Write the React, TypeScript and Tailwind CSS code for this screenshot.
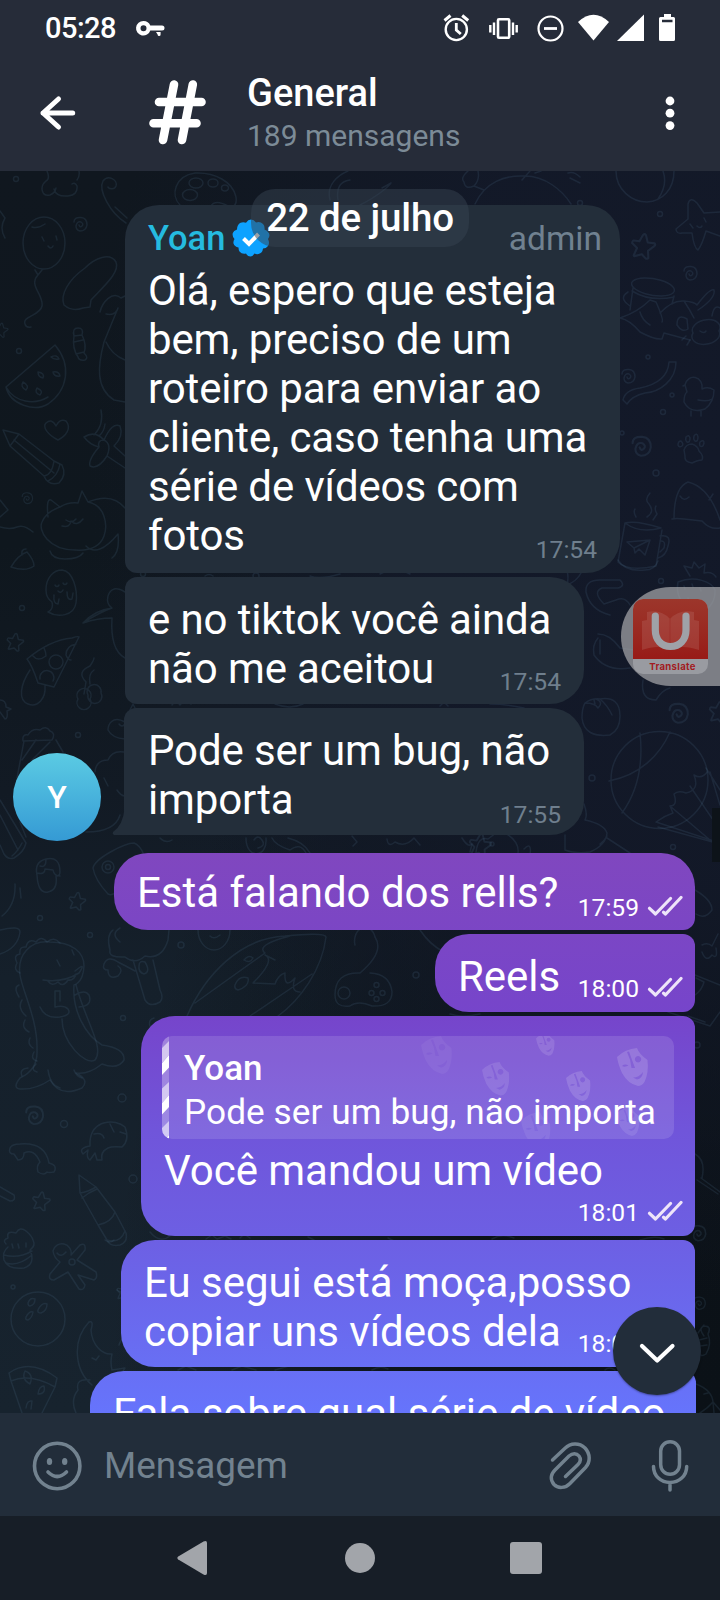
import React from "react";

type Placed = { x: number; y: number; s?: number; r?: number };

const DOTS: [number, number, number][] = [
  [16, 179, 2.5], [19, 351, 2.5], [580, 373, 2], [660, 214, 2.5], [648, 357, 2], [672, 395, 2], [663, 412, 2.5],
  [622, 433, 2], [656, 473, 3], [661, 581, 2.5], [592, 778, 3], [673, 847, 2.5], [22, 608, 2.5], [78, 735, 2.5],
  [40, 918, 2.5], [90, 935, 2.5], [181, 945, 3], [123, 1018, 2.5], [122, 1098, 4], [64, 1124, 3.5], [133, 1179, 4],
  [13, 1287, 2], [416, 975, 3], [697, 1045, 3], [143, 574, 2.5], [256, 576, 3], [580, 203, 2.5], [492, 844, 2],
];

const SPIRALS: Placed[] = [
  { x: 80, y: 224 }, { x: 27, y: 498, s: 0.8 }, { x: 690, y: 273 }, { x: 628, y: 376 }, { x: 641, y: 446, s: 1.4 },
  { x: 678, y: 713, s: 1.4 }, { x: 34, y: 1115, s: 1.3 }, { x: 698, y: 1233, s: 1.1 }, { x: 699, y: 1303, s: 0.9 },
];

const STARS: Placed[] = [
  { x: 643, y: 246, s: 1.4 }, { x: 15, y: 642 }, { x: 77, y: 901 }, { x: 41, y: 1201, s: 1.05 }, { x: 719, y: 712, s: 1.2 },
  { x: 124, y: 1292, s: 0.9 }, { x: 1, y: 330, s: 0.8 }, { x: 480, y: 845, s: 1.3 },
];

const DOODLES = [
  "M47 171C50 178 48 180 46 181C39 187 42 197 50 195Q55 193 56 188M54 189Q56 197 68 196Q78 195 77 186Q75 182 72 184M77 180Q80 176 79 171",
  "M126 223C110 213 98 190 103 181C108 174 118 180 116 186C114 191 108 188 108 187M115 207L127 218",
  "M180 205C170 195 175 176 195 173C215 172 233 182 236 197Q237 203 234 206M211 206Q215 199 228 206",
  "M189 183a7 5 0 1 0 14 0a7 5 0 1 0-14 0M208 183a5 4 0 1 0 10 0a5 4 0 1 0-10 0M221.500 188a3.500 3 0 1 0 7 0a3.500 3 0 1 0-7 0M182.500 195a7.500 5.500 0 1 0 15 0a7.500 5.500 0 1 0-15 0",
  "M0 211L5 218Q-1 228 5 238M330 200C326 185 338 175 348 171M338 200Q335 182 350 180M360 205C380 195 390 185 391 183L382 188",
  "M23 243a21 26 0 1 0 42 0a21 26 0 1 0-42 0M32 227Q38 229 45 224M42 237l2 4M56 236l1 4M48 246q3 4 5 0M35 270l3 5l4-5M38 275C28 285 44 295 42 306C40 316 22 316 25 324q1 4 6 3",
  "M83 308L90 307L91 300C105 285 120 272 116 262C110 252 95 258 85 268C68 280 60 295 64 305Q72 312 83 308Z",
  "M100 312C102 303 112 290 121 298L125 296M106 314Q116 316 118 308L104 342C98 365 95 388 114 400L125 402M106 342Q112 355 125 360",
  "M74 336q-2-8 4-8q6 0 4 7q5 10 2 18q5 5 1 7q-6 1-7-3q-6-9-4-21M74 336l8-1M74 342l9-2M76 354l8-2",
  "M55 345L6 387C10 405 35 412 48 404C68 390 72 365 55 345ZM6 387C15 403 35 405 48 397",
  "M23 382q-3 5 3 8q4-4-3-8M37 388q-3 5 3 7q4-4-3-7M38 372q0 5 5 6q2-5-5-6M53 372q1 5 7 4q-1-5-7-4M51 357q3 3 8 2q-2-5-8-2",
  "M58 440C48 435 42 427 46 423Q52 418 56 426Q60 418 66 421C72 428 66 436 58 440Z",
  "M3 430L10 446L44 476Q48 486 59 483Q67 475 62 465L54 461L19 434ZM10 446L19 434M14 440L54 473M44 476Q52 475 54 461M48 481Q58 476 60 464",
  "M101 410Q104 425 94 435M84 437Q95 430 104 440Q112 422 120 426Q124 436 114 446L125 456M84 437Q90 445 99 447Q88 460 90 466Q98 470 107 456L125 468M99 447q-2-7 5-7q8 4 3 16M105 424q-1 8-6 12",
  "M48 517Q46 498 51 500L60 507Q68 502 78 503L82 491L88 502C105 505 108 525 104 536C100 547 90 551 75 550C48 550 38 530 42 522Q46 512 60 507M50 551q2 8 15 8q14 0 18-6M88 502Q112 492 125 508M66 520q6 4 10-1M62 526q8 2 9-5q6 6 12-2M86 546Q98 558 118 534Q120 552 112 558",
  "M0 500l8 10l-8 7M0 527Q10 530 17 527T33 532M11 567Q18 555 27 552Q34 560 34 566Q26 572 11 567M22 555q-1-6 4-6",
  "M46 590C46 577 54 570 62 570C73 571 78 590 76 603C74 616 58 618 48 612Q54 609 52 602Q46 598 46 590ZM55 585q2 3 4 0M63 583q2 3 4 0M58 591q3 3 5-1M54 595q-1 9 4 9l1-5M67 592q0 9 5 7l1-6",
  "M125 592Q112 584 108 596Q106 604 112 608Q95 610 83 623Q98 618 112 618Q110 650 125 658M112 608Q100 612 83 623",
  "M79 637L54 687L38 683Q32 665 27 659Q50 640 72 638Q78 636 79 637M33 656Q38 662 46 656Q46 652 44 648M76 644Q66 646 66 655Q68 660 71 660M49 662a7 7 0 1 1 14 0a7 7 0 1 1-14 0M40 679a7 7 0 1 1 13 2M30 670C20 685 18 700 28 704C38 708 46 698 45 686",
  "M84 694l2-12q-10-10 4-16q4-6 4-8M90 684q-2-10 4-14M78 699a7 7 0 1 0 12 0a7 7 0 1 0-12 0M88 695a7 7 0 1 0 13-2a7 7 0 1 0-13 2",
  "M0 700q6 0 6 7l5 2l-4 2q1 8-2 8L0 712M125 722C112 715 108 725 108 730Q112 738 125 739M130 710l3-6l3 6M119 724q3 4 6 0",
  "M23 741Q22 734 28 735Q32 728 40 730Q46 725 50 731Q56 733 52 740ZM24 741L17 778M36 740L22 760M56 740L63 752M50 742L32 760",
  "M95 772Q96 760 108 760Q112 750 124 752M104 778l4 8M86 832Q115 832 120 815M117 790q4 6 8 6",
  "M0 800L26 843Q24 852 14 858Q8 860 4 854L0 845M0 815L18 850M12 856q6-5 10-13M20 822l6 15",
  "M93 868C95 858 125 843 134 843Q140 845 144 855M93 868Q95 880 108 894Q112 896 116 892M102 867a6 6 0 1 0 12 0a6 6 0 1 0-12 0M105.500 867a2.500 2.500 0 1 0 5 0a2.500 2.500 0 1 0-5 0",
  "M37 875Q34 862 46 859Q60 856 60 872Q60 876 56 876Q58 890 48 892Q38 894 37 875ZM37 873q8 2 8-4l8 1q1 6 7 6M40 866q6 2 6-6",
  "M15 884Q16 905 2 916M20 888l1 10M0 930Q20 925 20 932Q18 948 0 954",
  "M20 1078Q38 1070 37 1050C38 1020 22 990 20 975C17 955 30 940 50 942C72 942 84 952 84 966Q83 982 74 985C72 1010 85 1035 102 1045Q125 1048 124 1060Q118 1070 102 1064Q88 1075 76 1073Q90 1080 82 1088Q60 1098 50 1080Q35 1090 20 1089Q12 1088 20 1078Z",
  "M43 980q20 3 36-7q8-12-4-2M48 981q4 6 10 1q5 6 10-2q6 1 8-6M40 1007q5 12 20 10q12-2 8-8q-4-4-13-2l0-16l5 0l0 10M75 995q10-6 14 0q4 11-10 12M62 1019C62 1042 85 1066 95 1060C105 1048 85 1020 76 985M57 960l3 6M72 950l2 5M48 1070Q50 1085 60 1088M74 1070q2 6 8 8",
  "M20 973q-7-3-3-10q-4-8 3-9q-1-8 6-7q2-9 10-5q5-7 11 0q7-6 13 1M19 985q-6 2 0 12M22 1000q-5 8 4 16M25 1020q-4 8 4 12M30 1038q-3 6 3 10M34 1052q-4 7 3 9M36 1064q-6 6 1 8M28 1068q-9 1-6 8",
  "M113 930Q106 935 110 950Q108 958 125 957Q135 965 145 956Q162 960 168 940L169 930M120 942q-10-8 0-14M133 960L145 1000Q150 1008 160 1002Q164 998 160 990L153 960M139 966q0-6 6-4q6 10-1 12q-6-2-5-8M135 971Q124 965 118 962Q108 955 104 964Q102 970 108 970Q108 980 118 976Q124 970 118 966",
  "M187 1016C205 975 240 938 285 936Q325 932 326 937C322 970 300 1000 278 1016M195 1003L265 953Q255 945 290 936M250 1016L312 974M275 960L265 955Q276 960 253 983L275 984Q278 975 285 973Q284 990 295 978Q290 992 300 992M244 960q5-6 9-2q-3 6-9 2M235 985q4-10 13-7q2 8-10 12q-4-1-3-5",
  "M198 930a12 15 0 0 0 32 0M210 936q4 4 10-1M355 945a10 13 0 1 1 20-8q10 15-15 36Q335 972 335 995Q335 1008 350 1006Q358 1000 372 1006Q392 1007 392 992Q390 974 370 973",
  "M338 993a6 6 0 1 0 12 0a6 6 0 1 0-12 0M374 985a2.500 2.500 0 1 0 5 0a2.500 2.500 0 1 0-5 0M369 993a2.500 2.500 0 1 0 5 0a2.500 2.500 0 1 0-5 0M380 993a2.500 2.500 0 1 0 5 0a2.500 2.500 0 1 0-5 0M374 999a2.500 2.500 0 1 0 5 0a2.500 2.500 0 1 0-5 0M420 930Q430 945 444 952",
  "M90 1141C92 1120 115 1118 125 1127Q130 1140 122 1147Q112 1146 108 1148Q100 1152 102 1160L97 1160L95 1153L90 1160Q86 1158 88 1150L83 1154Q78 1148 90 1146ZM110 1124l4 8M94 1134q8-2 10 4M120 1132l6 2",
  "M10 1148Q12 1144 20 1144Q45 1142 49 1163Q58 1165 54 1172Q48 1173 47 1172Q44 1176 38 1172Q36 1166 40 1162Q34 1148 24 1153Q24 1160 18 1160L14 1154Q8 1154 10 1148Z",
  "M79 1175L80 1193L98 1225L107 1240Q110 1247 120 1245Q128 1242 126 1233L115 1212L96 1187ZM80 1193Q88 1192 96 1187M98 1225Q112 1222 115 1212M82 1198l7-5l8-4M107 1240Q120 1244 125 1231M0 1187l14 8q2 6-4 6L0 1196",
  "M6 1244Q2 1240 8 1238Q6 1230 16 1233Q20 1226 26 1231Q32 1236 33 1240Q36 1246 30 1250Q36 1264 24 1268Q8 1270 4 1260Q2 1252 8 1247M4 1255q14 4 28-4M6 1263q12 4 26-8M12 1244l1 4M18 1244l1 4M26 1243l0 4",
  "M53 1251a9 9 0 1 1 18 4L80 1245Q86 1242 85 1250L77 1260L96 1272Q98 1278 94 1280L78 1275L85 1285Q84 1291 79 1289L68 1272L54 1280Q48 1280 50 1274L60 1262Q54 1258 53 1251ZM57 1253q4 5 9-1M69 1262a3 3 0 1 0 6 0a3 3 0 1 0-6 0",
  "M11 1319a27 27 0 1 0 54 0a27 27 0 1 0-54 0M28 1303q2-6 7-4q0 6-5 7q-2 0-2-3M38 1310q4-8 9-6q0 7-6 9q-4 0-3-3M26 1317q3-6 7-5q-1 6-5 8q-3 0-2-3",
  "M89 1322C72 1340 74 1370 92 1385M89 1322Q94 1320 91 1330C92 1345 102 1355 112 1354Q110 1362 112 1370L125 1368Q120 1378 108 1376M92 1358l4 2l3-4M119 1345q2-6 6-8M90 1380Q75 1378 78 1390Q70 1400 76 1413",
  "M9 1373Q30 1358 57 1378L55 1387L42 1413M9 1373L11 1381Q30 1373 55 1387M11 1381L22 1413M25 1371q-4 8 5 13q4-10-5-13M38 1394q1-8 6-8q2 8-6 8M26 1408q1-8 6-7l-1 8",
  "M117 1290q8 6 8-4M105 1240Q110 1244 114 1240",
  // right side
  "M475 204C485 182 505 175 525 176C545 176 562 190 571 204M478 171Q480 180 474 186Q465 190 464 182Q460 178 468 171M474 186L484 190M522 180l8-9M535 173l6-2M570 178l10 5M568 173q6-2 12 4",
  "M616 171C616 190 632 202 647 202C662 201 674 190 674 171M663 171Q668 185 658 199",
  "M688 204Q690 196 697 203L704 213L720 212M688 204L688 219L676 229Q676 234 682 233L692 233Q694 248 698 250Q702 245 706 231L720 236M690 224l3 4M704 218l2 4M697 226q3 3 5 0",
  "M633 281a21 8 10 1 0 40 12a21 8 10 1 0-40-12M633 288L630 310M674 296L672 304M632 291Q650 302 674 297M628 292Q618 298 630 306M620 318Q638 312 650 300L656 302Q664 320 662 322M620 318Q630 320 640 332Q655 340 662 339L664 333L690 340M660 313Q672 300 684 301Q690 310 694 318M640 312Q642 320 650 325M684 301Q695 302 697 305Q710 288 714 290Q716 298 698 310",
  "M693 333a14 9-10 1 0 26-2a14 9-10 1 0-26 2M677 325q0-12 10-6l1 10q-6 4-11-4M712 316q2-12 8-8M686 336l-4 4M690 340l-3 5M700 331q4 3 6 0",
  "M669 362L676 362C676 380 660 392 645 393Q632 396 627 404L623 400Q625 390 640 388C655 385 668 378 669 362Z",
  "M685 385a8 9 0 1 1 17 4Q708 386 714 390Q714 402 705 409Q690 414 684 402Q684 394 687 392ZM685 385l-2 1M698 400q10 2 14-1M691 411l0 5M701 411l0 5",
  "M684 450q2-6 8-6q6 2 7 7Q704 456 702 460Q698 460 692 463Q684 462 685 456ZM678 445q0-4 3-4q3 3 1 5q-3 2-4-1M686 437q3-3 4 1q0 5-3 4q-2-2-1-5M694 436q3-4 4 1q0 5-3 4q-2-2-1-5M700 442q4-3 4 1q-1 5-4 3q-1-2 0-4",
  "M672 519Q676 518 684 519L702 521Q710 530 720 528M674 519C674 500 678 486 688 482C705 486 715 505 720 520M680 496q4 6 9 1M709 500l4-6",
  "M625 523L618 562Q628 572 656 566L662 530M625 523Q636 520 661 528Q640 534 625 523M660 536Q672 534 668 546Q666 556 658 558M660 541Q666 540 664 548L660 552M627 542L650 540L645 555L639 549L635 553L634 548ZM634 548L650 540M650 493Q644 500 649 504Q655 512 647 517M635 509q-2 3 1 8M656 506q-2 3 1 8l-4 6",
  "M678 582C695 575 712 582 715 590C716 610 695 620 686 606Q675 596 678 582ZM690 576l-6-10l8 2l2-6l5 6l6-4l-1 9q8-2 12 4M684 586l1 3M692 584l1 3M700 588l1 3M688 598l1 3M697 600l1 3M618 560Q625 572 645 570Q655 570 658 561",
  "M610 615Q590 610 586 592Q585 580 600 580L620 580Q626 586 618 588L602 588Q592 592 604 604L616 600Q625 596 630 605M598 638Q592 645 594 655Q606 672 630 668M598 634Q610 634 620 648L634 650M600 640l0 14M643 680Q640 700 656 700Q662 690 670 688",
  "M567 571q2 6 0 14q10-4 14-12",
  "M585 703Q592 698 600 699Q620 696 620 716Q620 730 610 735Q584 738 582 718Q582 708 585 703M585 703q10 0 13 5q6-6-2-9M600 699Q608 706 612 715M595 704l-1-4",
  "M611 780a48.500 48.500 0 1 0 97 0a48.500 48.500 0 1 0-97 0M640 733C644 770 635 795 622 813M609 781C640 775 660 755 670 732",
  "M706 768L720 790M710 772L720 805M694 775Q702 780 708 771M694 775Q700 790 686 793Q678 790 674 794Q678 806 670 806L673 813Q664 816 656 822L720 843M658 827L720 844M690 786L720 830M670 806L710 840",
  "M584 804Q588 815 585 820Q604 824 607 833Q606 845 590 852Q575 854 565 850V835M600 844q5-4 7-8M607 838L630 853",
  "M387 839Q388 848 395 842Q405 848 414 838L420 845M462 838q6 10 10 6l-2 8M476 852Q478 836 488 839L500 830Q520 840 518 853M524 849q8-8 6 6",
  "M695 890Q712 900 712 910Q705 920 696 914M702 945Q708 942 712 946L718 934M702 952Q706 963 712 955Q718 960 716 948M695 975L720 985M695 995Q702 990 704 982L696 978M668 1012L710 1026L720 1012M688 1016L705 1022",
  "M695 1154Q706 1160 702 1178M701 1178L720 1192M697 1180L718 1194",
  "M704 1336q-6-8 0-10q8 0 4 8q4 10-2 20q-6 4-6-2M699 1340l8-2M700 1346l7-1M698 1333q4-6 6-8",
  "M696 1384Q712 1390 713 1402L720 1410M704 1394l4-1M700 1413Q708 1408 713 1402L714 1413",
  // glimpses between bubbles
  "M160 838q6 6 12 2M246 838C246 860 268 858 266 838M254 840q4-6 8 0t-4 8M272 838Q275 845 290 850Q300 842 306 853M288 838Q304 842 310 853M352 836l5 6l-4 4",
  "M172 705l4-5l4 5l5-6l6 5M275 704q15 6 28 0M205 576q4-3 8 0M310 576q10 4 30-2M380 574q15-8 30 0M440 706l4-4l4 4M490 704q16 0 34 4",
  "M150 1026q-2-6 4-8M206 1239l6-4l5 4l8-3l6 3M240 1238l4-4l6 4M308 1237l6 3M388 1238l6 3M492 1239q10-6 22-1M640 1240q15-5 24-1M150 1232Q160 1244 170 1236",
  "M178 1370l8-4l10 4M232 1370l10-4l14 4M275 1370l14-4M372 1370q8-5 16-1M605 1370q4-4 10 0M450 1014q12 4 30 0",
];

function Wallpaper() {
  return (
    <div className="absolute inset-0 -z-10 bg-[radial-gradient(ellipse_at_100%_24%,#131929_0%,rgba(19,25,41,0.9)_30%,rgba(19,25,41,0)_62%),radial-gradient(ellipse_at_100%_100%,#0b1117_0%,rgba(11,17,23,0.95)_25%,rgba(11,17,23,0)_60%),linear-gradient(180deg,#10171f_0%,#0f171e_30%,#121a24_50%,#15202b_65%,#17232e_100%)]">
      <svg className="block h-full w-full" viewBox="0 171 720 1242" fill="none" stroke="rgba(86,124,150,0.165)" strokeWidth="1.5" strokeLinecap="round" strokeLinejoin="round">
        {DOODLES.map((d) => (
          <path key={d} d={d} />
        ))}
        {DOTS.map(([x, y, r]) => (
          <circle key={`${x}-${y}`} cx={x} cy={y} r={r} />
        ))}
        {SPIRALS.map((p) => (
          <path
            key={`${p.x}-${p.y}`}
            transform={`translate(${p.x} ${p.y}) scale(${p.s ?? 1})`}
            d="M-6 -2Q-6 -7 1 -6.500Q7 -6 7 1Q6 7 0 7Q-4 6 -4 2Q-3 -3 1 -2Q4 0 2 2Q0 4 -1 1"
          />
        ))}
        {STARS.map((p) => (
          <path
            key={`${p.x}-${p.y}`}
            transform={`translate(${p.x} ${p.y}) scale(${p.s ?? 1}) rotate(8)`}
            d="M-1 -8Q0 -9 1 -8L3 -3L8 -3Q9 -2 8 -1L4 3L5 8Q4 9 3 8.500L0 6L-5 8Q-6 8 -5.500 7L-4 2L-8 -1Q-8 -3 -7 -3L-3 -3Z"
          />
        ))}
      </svg>
    </div>
  );
}

function StatusBar() {
  return (
    <div className="flex h-14 shrink-0 items-center pl-[45px]">
      <span className="w-[90px] text-[29px] leading-[34px] font-medium tracking-[-0.5px]">05:28</span>
      <svg className="h-5 w-8" viewBox="135 17 32 20" fill="#fff">
        <path fillRule="evenodd" d="M143.500 20a7.300 7.300 0 0 1 6.800 4.500H162a2.500 2.500 0 0 1 0 5H150.300A7.300 7.300 0 1 1 143.500 20ZM143.500 24.200a3 3 0 1 0 0 6a3 3 0 0 0 0-6Z" />
        <path d="M156 31h4.600v2.500a1.500 1.500 0 0 1-3 0z" />
      </svg>
      <svg className="ml-[273px] h-8 w-[240px]" viewBox="440 11 240 32" fill="none" stroke="#fff" strokeWidth="2.400">
        <circle cx="456.300" cy="28.500" r="10.600" />
        <path d="M456.300 22v7l4.500 4" strokeWidth="2.800" />
        <path d="M444.500 19.500l6-5M468.200 19.500l-6-5" strokeWidth="3" />
        <rect x="498" y="18.200" width="11.200" height="18.600" rx="1" strokeWidth="2.600" />
        <path d="M490.300 24v7.500M494 21.500v12.500M513 21.500v12.500M516.700 24v7.500" />
        <circle cx="550.500" cy="27.500" r="12" strokeWidth="2.200" />
        <path d="M544 27.500h13" strokeWidth="2.800" />
        <path d="M578 21Q593.500 6.500 609 21L593.500 39.500Z" fill="#fff" stroke="none" />
        <path d="M617 40L644 13.500V40Z" fill="#fff" stroke="none" />
        <path fillRule="evenodd" d="M664 13h7v3h2.500q1.500 0 1.500 1.500v21q0 1.500-1.500 1.500h-13q-1.500 0-1.500-1.500v-21q0-1.500 1.500-1.500h3.500ZM662 18.700v2.500h10.500v-2.500Z" fill="#fff" stroke="none" />
      </svg>
    </div>
  );
}

function Header() {
  return (
    <div className="flex h-[115px] shrink-0 items-start pl-9">
      <svg className="mt-[37px] h-10 w-[44px]" viewBox="36 93 44 40" fill="none" stroke="#fff" strokeWidth="5" strokeLinecap="round" strokeLinejoin="round">
        <path d="M58.500 99L43 113L58.500 127M43 113H72.700" />
      </svg>
      <svg className="mt-[20px] ml-[66px] h-[72px] w-16" viewBox="146 76 64 72" fill="none" stroke="#fff" strokeWidth="8.600" strokeLinecap="round">
        <path d="M174 84.500L163 140M192.800 84.500L182 140M159 102H201.500M153.500 123.300H196.500" />
      </svg>
      <div className="ml-[37px] flex grow flex-col pt-[15px]">
        <span className="text-[38px] leading-[45px] font-medium">General</span>
        <span className="mt-[2px] text-[30px] leading-[36px] text-[#7c8b97]">189 mensagens</span>
      </div>
      <svg className="mt-[35px] mr-[40px] h-11 w-5" viewBox="660 91 20 44" fill="#fff">
        <circle cx="670" cy="101" r="4.400" />
        <circle cx="670" cy="113.200" r="4.400" />
        <circle cx="670" cy="125.600" r="4.400" />
      </svg>
    </div>
  );
}

function Ticks() {
  return (
    <svg className="h-7 w-[36px]" viewBox="0 0 36 28" fill="none" stroke="#eee4f9" strokeWidth="3.200" strokeLinecap="round" strokeLinejoin="round">
      <path d="M2.500 14.300L8.500 20L23.500 4.500M16.500 18.200L18.500 20L34 3.500" />
    </svg>
  );
}

type BubbleProps = {
  lines: string[];
  time?: string;
  box: string;
  text: string;
  meta?: string;
  mine?: boolean;
  children?: React.ReactNode;
};

function Bubble({ lines, time, box, text, meta = "", mine = false, children }: BubbleProps) {
  const tone = mine
    ? "ml-auto bg-fixed bg-[linear-gradient(180deg,#8047bf_853px,#7645cb_1016px,#7055da_1130px,#6d5fe3_1236px,#686ff4_1367px,#6674fc_1413px)]"
    : "bg-[#232e3a]";
  return (
    <div className={`relative mb-1 grid shrink-0 grid-cols-1 ${tone} ${box}`}>
      <div className={`col-start-1 row-start-1 ${text}`}>
        {children}
        {lines.map((line) => (
          <div key={line} className={`text-[42px] leading-[49px] whitespace-nowrap ${mine ? "tracking-[-0.03px]" : "tracking-[-0.12px]"}`}>
            {line}
          </div>
        ))}
      </div>
      {time && (
        <div className={`col-start-1 row-start-1 flex items-center self-end justify-self-end text-[24.6px] leading-7 ${mine ? "gap-2 pr-3" : "pr-[23px] text-[#6f7f8d]"} ${meta}`}>
          <span>{time}</span>
          {mine && <Ticks />}
        </div>
      )}
    </div>
  );
}

const MASKS = [
  { x: 421, y: 1036, s: 1, o: 0.05 },
  { x: 482, y: 1062, s: 0.88, o: 0.11 },
  { x: 536, y: 1033, s: 0.6, o: 0.12 },
  { x: 566, y: 1071, s: 0.79, o: 0.14 },
  { x: 617, y: 1048, s: 1, o: 0.15 },
  { x: 521, y: 1112, s: 0.95, o: 0.08 },
  { x: 616, y: 1107, s: 0.76, o: 0.1 },
];

function Quote() {
  return (
    <div className="relative mb-[7px] h-[103px] w-[512px] overflow-hidden rounded-[10px] bg-white/12">
      <svg className="absolute inset-0 h-full w-full" viewBox="162 1036 512 103">
        <rect x="162" y="1036" width="7" height="103" fill="#fff" fillOpacity="0.22" />
        <path d="M162 1048L169 1041V1055L162 1063ZM162 1088.500L169 1082V1095L162 1103.300ZM162 1128L169 1121V1135L162 1143Z" fill="#fff" fillOpacity="0.55" />
        <path d="M162 1063.300L169 1055V1067.500L162 1075ZM162 1103.300L169 1095V1107L162 1114.500ZM162 1143L169 1135V1145Z" fill="#fff" />
        {MASKS.map((m) => (
          <path
            key={`${m.x}-${m.y}`}
            transform={`translate(${m.x} ${m.y}) scale(${m.s})`}
            fill="#fff"
            fillOpacity={m.o}
            fillRule="evenodd"
            d="M0 9Q8 1 20 0Q22 6 30.500 12Q32 25 27.500 34Q25 38 21 38Q11 36 5 25Q1 16 0 9ZM21 8a3.200 3.200 0 1 0 .1 0ZM5 18Q8 15.500 11.500 17.500Q8 19.500 5 18ZM10 4L12 3.500Q15 12 18 20L14.500 20Q14 12 10 4ZM16 29.500Q22 29.500 26 24Q25.500 30.500 20 31.500Z"
          />
        ))}
      </svg>
      <div className="relative pt-[12px] pl-[22px] whitespace-nowrap">
        <div className="text-[35px] leading-[42px] font-medium">Yoan</div>
        <div className="mt-[1px] text-[35.2px] leading-[42px] tracking-[0.06px]">Pode ser um bug, não importa</div>
      </div>
    </div>
  );
}

function FloatingTranslator() {
  return (
    <div className="absolute top-[416px] right-0 flex h-[99px] w-[99px] items-start rounded-l-[50px] bg-[#a9aaac]/70 pt-3 pl-3">
      <div className="flex h-[75px] w-[75px] flex-col overflow-hidden rounded-[10px] bg-[#999ba1]">
        <div className="h-[60px] bg-linear-to-b from-[#9c362b] to-[#981a17]">
          <svg className="block h-[60px] w-[75px]" viewBox="0 0 75 60" fill="none">
            <path d="M14 13Q28 10 37 20Q46 10 61 13V21L66 22V51Q48 45 37 51Q26 45 9 51V22L14 21Z" fill="#b9706a" fillOpacity="0.3" />
            <path d="M37 20V50" stroke="#98241f" strokeOpacity="0.5" />
            <path d="M22.300 17V31C22.300 41 28.500 47.500 37.500 47.500S53 41 53 31V17" stroke="#9fa2a8" strokeWidth="7.200" strokeLinecap="round" />
          </svg>
        </div>
        <div className="pl-1 text-center font-[Inter,sans-serif] text-[9.6px] leading-[15px] font-bold tracking-[0.3px] text-[#a21c22]">Translate</div>
      </div>
    </div>
  );
}

function Chat() {
  return (
    <div className="relative isolate flex h-[1242px] shrink-0 flex-col overflow-hidden pt-[34px]">
      <Wallpaper />
      <Bubble
        box="ml-[125px] w-[495px] h-[368px] rounded-[34px] rounded-bl-[12px]"
        text="pl-[23px] pt-[13px]"
        meta="pb-[9px]"
        time="17:54"
        lines={["Olá, espero que esteja", "bem, preciso de um", "roteiro para enviar ao", "cliente, caso tenha uma", "série de vídeos com", "fotos"]}
      >
        <div className="-mt-[1px] mb-[7px] flex h-[42px] items-center text-[34.5px] leading-[42px]">
          <span className="font-medium text-[#25bbe0]">Yoan</span>
          <svg className="ml-[7px] h-[38px] w-[38px]" viewBox="0 0 38 38">
            <path d="M19 .5Q22 .5 24 3.500Q28 2 31 5Q33 7 32.500 10.500Q37 12.500 37.500 16Q37.500 18 36 20Q38 24 36 27Q34 29.500 31 29.500Q30.500 34 26.500 35Q24.500 35.500 22.500 34.500Q20.500 37.500 18.500 37.500Q15.500 37.500 14 34.500Q10 35.500 7.500 32.500Q6.500 31 6.500 28.500Q2.500 27.500 1.500 24.500Q1 22.500 2.500 20Q0 17.500 .8 14Q1.500 11.500 5 10.500Q5 6 8 4Q11 2.500 14 3.700Q16 .5 19 .5Z" fill="#0da2ff" />
            <path d="M11.500 19.500L17 25L26.500 15" fill="none" stroke="#fff" strokeWidth="4" />
          </svg>
          <span className="mt-[2px] mr-[18px] ml-auto text-[33.5px] text-[#708190]">admin</span>
        </div>
      </Bubble>
      <Bubble
        box="ml-[125px] w-[459px] h-[127px] rounded-l-[12px] rounded-r-[34px]"
        text="pl-[23px] pt-[18px]"
        meta="pb-[8px]"
        time="17:54"
        lines={["e no tiktok você ainda", "não me aceitou"]}
      />
      <Bubble
        box="ml-[124px] mb-[18px] w-[460px] h-[127px] rounded-tl-[12px] rounded-r-[34px]"
        text="pl-6 pt-[18px]"
        meta="pb-[6px]"
        time="17:55"
        lines={["Pode ser um bug, não", "importa"]}
      >
        <svg className="absolute bottom-0 -left-[12px] h-[26px] w-[13px]" viewBox="0 0 13 26">
          <path d="M13 0H12.500Q11 16 1 23Q0 25 2 26H13Z" fill="#232e3a" />
        </svg>
      </Bubble>
      <Bubble
        mine
        box="mr-[25px] w-[581px] h-[77px] rounded-[34px] rounded-br-[12px]"
        text="pl-[23px] pt-[15px]"
        meta="pb-[8px]"
        time="17:59"
        lines={["Está falando dos rells?"]}
      />
      <Bubble
        mine
        box="mr-[25px] w-[260px] h-[78px] rounded-l-[34px] rounded-r-[12px]"
        text="pl-[23px] pt-[18px]"
        meta="pb-[9px]"
        time="18:00"
        lines={["Reels"]}
      />
      <Bubble
        mine
        box="mr-[25px] w-[554px] h-[220px] rounded-l-[34px] rounded-r-[12px]"
        text="pl-[23px] pt-[20px]"
        meta="pb-[9px]"
        time="18:01"
        lines={["Você mandou um vídeo"]}
      >
        <div className="-ml-[2px]">
          <Quote />
        </div>
      </Bubble>
      <Bubble
        mine
        box="mr-[25px] w-[574px] h-[127px] rounded-l-[34px] rounded-r-[12px]"
        text="pl-[23px] pt-[18px]"
        meta="pb-[9px]"
        time="18:02"
        lines={["Eu segui está moça,posso", "copiar uns vídeos dela"]}
      />
      <Bubble
        mine
        box="mr-[24px] w-[606px] h-[127px] rounded-l-[34px] rounded-r-[12px]"
        text="pl-[23px] pt-[18px]"
        lines={["Fala sobre qual série de vídeo"]}
      />

      <div className="absolute top-[18px] left-[251px] flex h-[58px] w-[218px] items-center justify-center rounded-[24px] bg-[#36414f]/50 text-[38.500px] font-medium tracking-[-0.15px] whitespace-nowrap">
        <span className="pb-[1px]">22 de julho</span>
      </div>
      <FloatingTranslator />
      <div className="absolute top-[637px] right-0 h-[54px] w-2 bg-[#0d1319]" />
      <div className="absolute top-[1136px] left-[613px] flex h-[88px] w-[88px] items-center justify-center rounded-full bg-[#222d3a] shadow-[0_1px_2px_rgba(0,0,0,0.35)]">
        <svg className="mt-[2px] h-6 w-10" viewBox="0 0 40 24" fill="none" stroke="#fff" strokeWidth="4.200" strokeLinecap="round" strokeLinejoin="round">
          <path d="M5 6L20.200 20.500L35.500 6" />
        </svg>
      </div>
    </div>
  );
}

function Composer() {
  return (
    <div className="flex h-[103px] shrink-0 items-center bg-[#222d3a] pt-[2px] pl-8 text-[#72828f]">
      <svg className="h-[52px] w-[52px]" viewBox="32 1440 52 52" fill="none" stroke="currentColor" strokeWidth="3.600" strokeLinecap="round">
        <circle cx="57.200" cy="1466" r="22.700" />
        <ellipse cx="49.500" cy="1461.500" rx="2.700" ry="3.600" fill="currentColor" stroke="none" />
        <ellipse cx="64.700" cy="1461.500" rx="2.700" ry="3.600" fill="currentColor" stroke="none" />
        <path d="M48 1472Q57.200 1481 66.500 1472" />
      </svg>
      <span className="ml-5 pt-[1px] text-[36.900px] leading-[44px]">Mensagem</span>
      <svg className="mr-[28px] ml-auto h-[56px] w-[147px]" viewBox="545 1438 147 56" fill="none" stroke="currentColor" strokeWidth="3.500" strokeLinecap="round">
        <path d="M552.500 1460L565 1448.300C570.500 1443 579 1442.500 585 1448C590.500 1454 590.500 1462 585.500 1467.500L570 1483.500C565.500 1488.300 558 1488.700 554 1484.500C550 1480 550.500 1474.500 555 1470L569 1456C572.500 1453 576.500 1453 579 1456C581.200 1459 580.500 1462 578 1464.500L565.500 1476.500" />
        <rect x="660.700" y="1441.700" width="18.800" height="32.500" rx="9.400" />
        <path d="M653.500 1466.500C653.500 1476 661 1482.500 670 1482.500S686.700 1476 686.700 1466.500M670 1482.500V1490" />
      </svg>
    </div>
  );
}

function NavBar() {
  return (
    <div className="flex h-[84px] shrink-0 items-center justify-between bg-[#171e27] pr-[178px] pl-[177px]">
      <svg className="h-9 w-[31px]" viewBox="0 0 31 36" fill="#a2a5aa">
        <path d="M1.200 16.400L26.500 1.500Q30 0 30 3V33Q30 36 26.500 34.500L1.200 19.600Q-.5 18 1.200 16.400Z" />
      </svg>
      <div className="ml-[2px] h-[30px] w-[30px] rounded-full bg-[#a2a5aa]" />
      <div className="h-8 w-8 rounded-[3px] bg-[#a2a5aa]" />
    </div>
  );
}

function Avatar() {
  return (
    <div className="absolute top-[582px] left-[13px] flex h-[88px] w-[88px] items-center justify-center rounded-full bg-linear-to-b from-[#5bcbe3] to-[#359ad4] text-[32px] font-medium">
      Y
    </div>
  );
}

export default function App() {
  return (
    <div className="flex h-[1600px] w-[720px] flex-col overflow-hidden bg-[#262c39] font-[Roboto,sans-serif] text-white">
      <StatusBar />
      <Header />
      <div className="relative shrink-0">
        <Chat />
        <Avatar />
      </div>
      <Composer />
      <NavBar />
    </div>
  );
}
